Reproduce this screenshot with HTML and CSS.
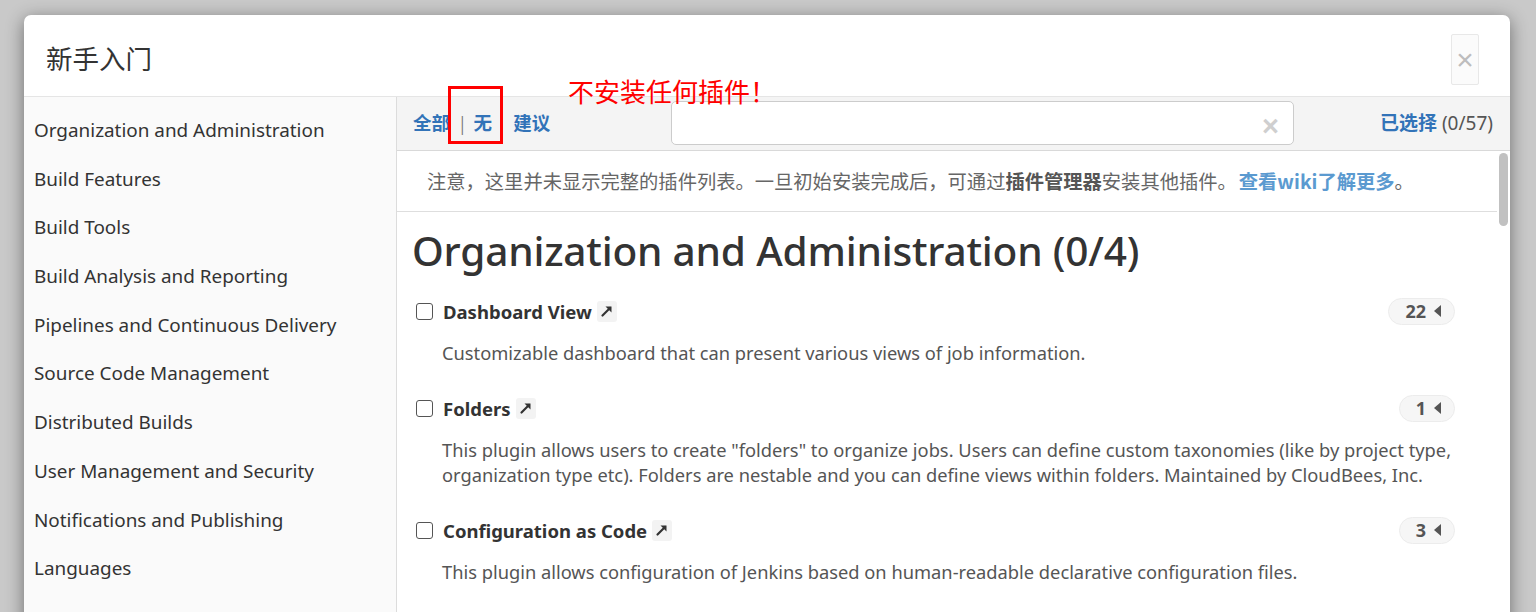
FILE: index.html
```html
<!DOCTYPE html>
<html lang="zh">
<head>
<meta charset="utf-8">
<title>新手入门</title>
<link rel="stylesheet" href="styles.css">
</head>
<body>
<div class="overlay">
  <div class="modal">
    <div class="modal-header">
      <h4 class="modal-title">新手入门</h4>
      <button class="close-btn">×</button>
    </div>
    <div class="modal-body">
      <ul class="sidebar">
        <li>Organization and Administration</li>
        <li>Build Features</li>
        <li>Build Tools</li>
        <li>Build Analysis and Reporting</li>
        <li>Pipelines and Continuous Delivery</li>
        <li>Source Code Management</li>
        <li>Distributed Builds</li>
        <li>User Management and Security</li>
        <li>Notifications and Publishing</li>
        <li>Languages</li>
      </ul>
      <div class="main">
        <div class="toolbar">
          <div class="filters">
            <a class="link">全部</a><span class="sep">|</span><a class="link">无</a><a class="link suggest">建议</a>
          </div>
          <div class="search"><span class="search-clear">×</span></div>
          <div class="selected"><a class="link">已选择</a> (0/57)</div>
        </div>
        <div class="content-wrap">
          <div class="content">
            <div class="notice">注意，这里并未显示完整的插件列表。一旦初始安装完成后，可通过<b>插件管理器</b>安装其他插件。<a class="wiki">查看wiki了解更多</a>。</div>
            <div class="plugins">
              <h1 class="cat-title">Organization and Administration (0/4)</h1>
              <div class="plugin">
                <div class="plugin-head">
                  <span class="checkbox"></span>
                  <span class="plugin-name">Dashboard View</span>
                  <span class="ext"><svg width="14" height="14" viewBox="0 0 14 14"><path d="M2.5 11.5 L10 4" stroke="#333" stroke-width="2.2" stroke-linecap="round"/><path d="M5.5 2.5 L11.5 2.5 L11.5 8.5 Z" fill="#333"/></svg></span>
                  <span class="badge">22<i class="tri"></i></span>
                </div>
                <p class="desc">Customizable dashboard that can present various views of job information.</p>
              </div>
              <div class="plugin">
                <div class="plugin-head">
                  <span class="checkbox"></span>
                  <span class="plugin-name">Folders</span>
                  <span class="ext"><svg width="14" height="14" viewBox="0 0 14 14"><path d="M2.5 11.5 L10 4" stroke="#333" stroke-width="2.2" stroke-linecap="round"/><path d="M5.5 2.5 L11.5 2.5 L11.5 8.5 Z" fill="#333"/></svg></span>
                  <span class="badge">1<i class="tri"></i></span>
                </div>
                <p class="desc">This plugin allows users to create "folders" to organize jobs. Users can define custom taxonomies (like by project type, organization type etc). Folders are nestable and you can define views within folders. Maintained by CloudBees, Inc.</p>
              </div>
              <div class="plugin">
                <div class="plugin-head">
                  <span class="checkbox"></span>
                  <span class="plugin-name">Configuration as Code</span>
                  <span class="ext"><svg width="14" height="14" viewBox="0 0 14 14"><path d="M2.5 11.5 L10 4" stroke="#333" stroke-width="2.2" stroke-linecap="round"/><path d="M5.5 2.5 L11.5 2.5 L11.5 8.5 Z" fill="#333"/></svg></span>
                  <span class="badge">3<i class="tri"></i></span>
                </div>
                <p class="desc">This plugin allows configuration of Jenkins based on human-readable declarative configuration files.</p>
              </div>
            </div>
          </div>
          <div class="scrollbar"><div class="thumb"></div></div>
        </div>
      </div>
    </div>
    <div class="annot-box"></div>
    <div class="annot-text">不安装任何插件！</div>
  </div>
</div>
</body>
</html>
```
FILE: styles.css
```css
* { box-sizing: border-box; }
html, body { margin: 0; padding: 0; }
body {
  background: #c9c9c9;
  font-family: "Noto Sans", "Noto Sans CJK SC", sans-serif;
  color: #333;
  overflow: hidden;
  height: 612px;
}
.overlay { padding: 15px 26px 0 24px; }
.modal {
  position: relative;
  width: 1486px;
  height: 700px;
  background: #fff;
  border-radius: 7px 7px 0 0;
  box-shadow: 0 4px 18px rgba(0,0,0,0.45);
}
.modal-header {
  height: 82px;
  border-bottom: 1px solid #e5e5e5;
  display: flex;
  align-items: center;
  justify-content: space-between;
  padding: 8px 31px 0 22px;
}
.modal-title {
  margin: 0 0 5px;
  font-family: "Noto Sans CJK SC", sans-serif;
  font-weight: 400;
  font-size: 26.5px;
  color: #333;
}
.close-btn {
  width: 28px;
  height: 51px;
  border: 1px solid #e8e8e8;
  background: #fbfbfb;
  border-radius: 2px;
  color: #bdbdbd;
  font-size: 30px;
  line-height: 1;
  padding: 0;
  font-family: "Liberation Sans", sans-serif;
}
.modal-body { display: flex; height: 620px; }
.sidebar {
  list-style: none;
  margin: 0;
  padding: 9px 0 0 10px;
  width: 373px;
  flex: 0 0 373px;
  background: #fafafa;
  border-right: 1px solid #dcdcdc;
}
.sidebar li {
  height: 48.7px;
  line-height: 48.7px;
  font-size: 18.9px;
  color: #333;
  white-space: nowrap;
}
.main { flex: 1; display: flex; flex-direction: column; min-width: 0; }
.toolbar {
  height: 54px;
  flex: 0 0 54px;
  background: #f4f4f4;
  border-bottom: 1px solid #d9d9d9;
  display: flex;
  align-items: center;
  padding: 0 17px 3px 16px;
}
.filters {
  flex: 0 0 258px;
  display: flex;
  align-items: center;
  font-family: "Noto Sans CJK SC", sans-serif;
  font-size: 18.5px;
  font-weight: 700;
}
.link { color: #3273b8; font-weight: 700; }
.sep { color: #777; font-weight: 400; margin: 0 9px 0 10px; font-size: 17px; }
.suggest { margin-left: 21px; }
.search {
  width: 623px;
  height: 44px;
  border: 1px solid #ccc;
  border-radius: 5px;
  background: #fff;
  display: flex;
  align-items: center;
  justify-content: flex-end;
  padding: 6px 14px 0 0;
  margin-top: 2px;
}
.search-clear {
  color: #cfcfcf;
  font-family: "Liberation Sans", sans-serif;
  font-weight: 700;
  font-size: 29px;
  line-height: 1;
}
.selected {
  margin-left: auto;
  font-family: "Noto Sans", "Noto Sans CJK SC", sans-serif;
  font-size: 19px;
  color: #555;
}
.selected .link { font-family: "Noto Sans CJK SC", sans-serif; }
.content-wrap { flex: 1; display: flex; min-height: 0; }
.content { flex: 1; min-width: 0; }
.scrollbar { flex: 0 0 13px; padding: 2px 1px 0 2px; }
.thumb { width: 9px; height: 73px; background: #c1c1c1; border-radius: 5px; }
.notice {
  height: 61px;
  border-bottom: 1px solid #dedede;
  padding: 0 0 0 30px;
  display: flex;
  align-items: center;
  font-family: "Noto Sans CJK SC", sans-serif;
  font-size: 19.3px;
  color: #666;
  white-space: nowrap;
}
.notice b { color: #555; font-weight: 700; }
.wiki { color: #5b9ad0; font-weight: 700; margin-left: 2px; }
.plugins { padding: 0 42px 0 16px; }
.cat-title {
  margin: 12px 0 18px;
  font-size: 40.6px;
  font-weight: 500;
  color: #333;
  line-height: 54px;
  letter-spacing: -0.2px;
  margin-left: -1px;
}
.plugin { margin-bottom: 28px; }
.plugin-head {
  display: flex;
  align-items: center;
  height: 30px;
}
.checkbox {
  width: 17px;
  height: 17px;
  border: 1.5px solid #555;
  border-radius: 3px;
  margin: 0 10px 0 3px;
  background: #fff;
}
.plugin-name { font-size: 18.5px; font-weight: 700; color: #333; }
.ext {
  width: 20px;
  height: 21px;
  margin-left: 5px;
  background: #f3f3f3;
  border-radius: 3px;
  display: inline-flex;
  align-items: center;
  justify-content: center;
}
.badge {
  margin-left: auto;
  height: 27px;
  padding: 0 13px 0 16px;
  border: 1px solid #ececec;
  background: #f6f6f6;
  border-radius: 14px;
  display: inline-flex;
  align-items: center;
  font-size: 18px;
  font-weight: 700;
  color: #555;
}
.tri {
  display: inline-block;
  width: 0;
  height: 0;
  margin-left: 8px;
  border-top: 6px solid transparent;
  border-bottom: 6px solid transparent;
  border-right: 7px solid #555;
}
.desc {
  margin: 14px 0 0 29px;
  font-size: 18.3px;
  line-height: 25px;
  color: #555;
}
.annot-box {
  position: absolute;
  left: 424px;
  top: 71px;
  width: 55px;
  height: 58px;
  border: 3px solid #f00;
}
.annot-text {
  position: absolute;
  left: 544px;
  top: 58px;
  font-family: "Noto Sans CJK SC", sans-serif;
  font-size: 26px;
  line-height: 36px;
  color: #f00;
}
```
